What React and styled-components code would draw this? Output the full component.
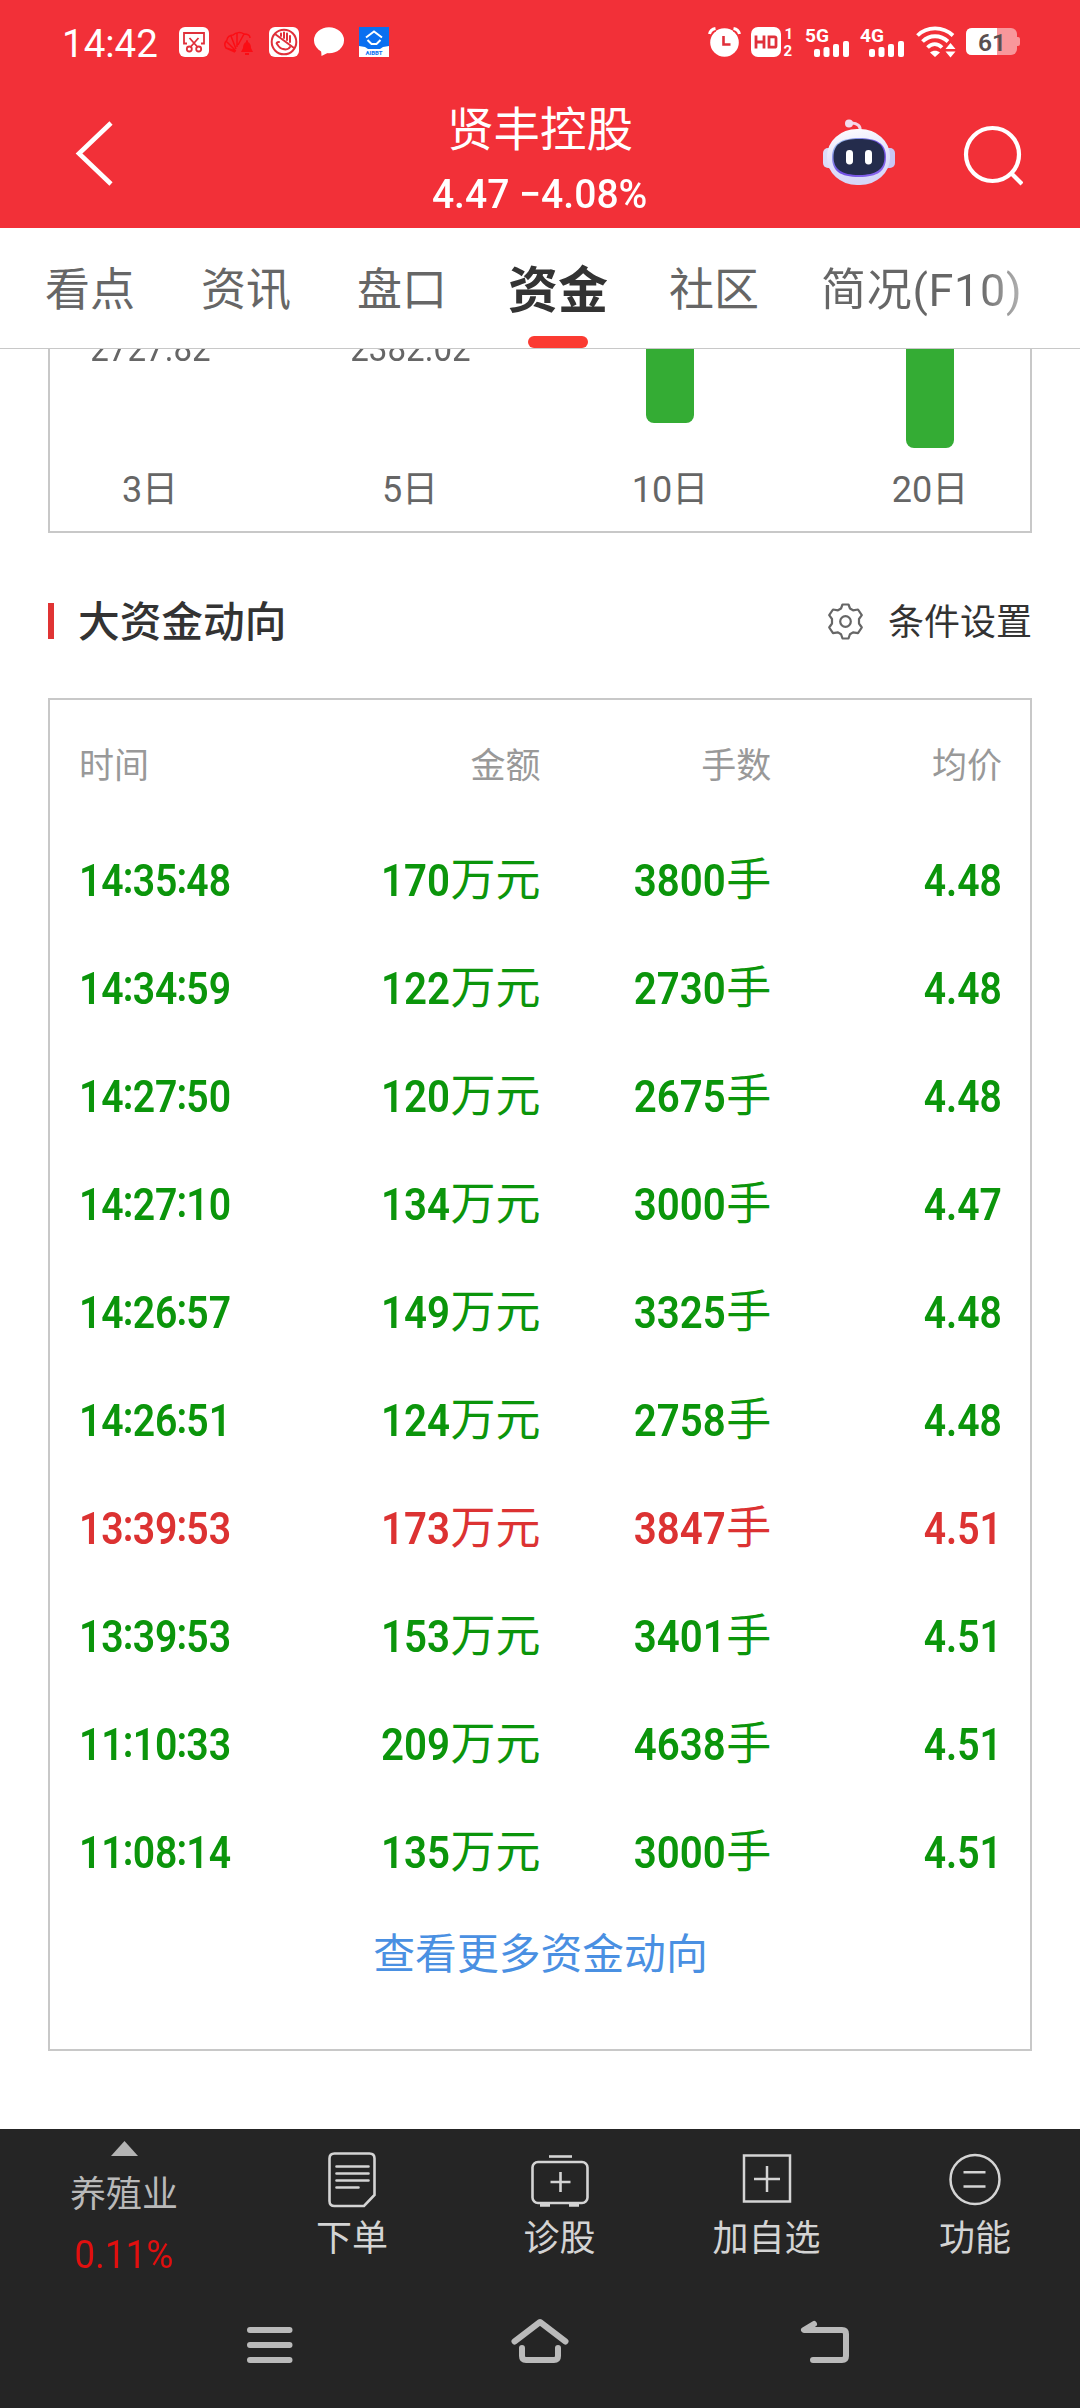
import React from 'react';
import styled, { createGlobalStyle } from 'styled-components';

const GlobalStyle = createGlobalStyle`
  body {
    margin: 0;
    background: #fff;
    font-family: Roboto, "Noto Sans CJK SC", sans-serif;
    color: #333;
  }
`;

const Page = styled.div`
  display: flex;
  flex-direction: column;
  width: 1080px;
  height: 2408px;
  overflow: hidden;
`;

const StatusBar = styled.div`
  display: flex;
  justify-content: space-between;
  align-items: center;
  height: 84px;
  padding: 0 60px 0 62px;
  box-sizing: border-box;
  background: #f23038;
  color: #fff;
`;

const StatusGroup = styled.div`
  display: flex;
  align-items: center;
  gap: ${({ $gap }) => $gap}px;

  svg {
    display: block;
    overflow: visible;
  }
`;

const Clock = styled.span`
  width: 102px;
  font-size: 38.5px;
  line-height: 44px;
  padding-top: 4px;
  white-space: nowrap;
`;

const Header = styled.header`
  display: grid;
  grid-template-columns: 300px 1fr 300px;
  height: 144px;
  background: #f23038;
  color: #fff;
`;

const BackButton = styled.button`
  display: flex;
  align-items: center;
  padding: 0 0 6px 72px;
  border: 0;
  background: none;
`;

const HeaderTitle = styled.div`
  display: flex;
  flex-direction: column;
  align-items: center;
  padding-top: 18px;
`;

const StockName = styled.div`
  font-size: 46.5px;
  line-height: 56px;
`;

const StockPrice = styled.div`
  font-size: 40.5px;
  font-weight: 500;
  line-height: 50px;
  margin-top: 11px;
  white-space: pre;
  transform: scaleX(0.965);
`;

const HeaderActions = styled.div`
  display: flex;
  align-items: flex-start;
  gap: 66px;
  padding: 35px 0 0 43px;

  svg:last-child {
    margin-top: 5px;
  }
`;

const TabBar = styled.nav`
  display: flex;
  gap: 66px;
  height: 121px;
  padding-left: 45px;
  box-sizing: border-box;
  border-bottom: 1px solid #c8c8c8;
`;

const StyledTab = styled.div`
  display: flex;
  flex-direction: column;
  align-items: ${({ $wide }) => ($wide ? 'flex-start' : 'center')};
  justify-content: space-between;
  flex: none;
  width: ${({ $wide }) => ($wide ? '202px' : '90px')};
  font-size: ${({ $active }) => ($active ? 50 : 45)}px;
  font-weight: ${({ $active }) => ($active ? 600 : 400)};
  line-height: 66px;
  padding-top: 30px;
  color: ${({ $active }) => ($active ? '#333' : '#666')};
  white-space: nowrap;
`;

const TabLabel = styled.span`
  ${({ $fade }) => $fade && `
    margin-left: -4px;
    letter-spacing: 0.7px;
    background: linear-gradient(90deg, #666 78%, #b4b4b4 100%);
    background-clip: text;
    color: transparent;
  `}
`;

const TabMark = styled.div`
  width: 60px;
  height: 12px;
  border-radius: 6px;
  background: #fb3b32;
`;

const Main = styled.main`
  flex: 1;
  padding: 0 48px;
  overflow: hidden;
`;

const ChartCard = styled.section`
  display: grid;
  grid-template-columns: repeat(4, 260px);
  justify-content: center;
  height: 184px;
  box-sizing: border-box;
  border: 2px solid #c8c8c8;
  border-top: 0;
`;

const ChartColumn = styled.div`
  display: flex;
  flex-direction: column;
  justify-content: space-between;
  align-items: center;
  padding-bottom: 22px;
`;

const ChartValue = styled.div`
  display: flex;
  align-items: flex-end;
  height: 18px;
  font-size: 36px;
  line-height: 36px;
  color: #666;
  overflow: hidden;
  transform: scaleX(0.92);
`;

const ChartBar = styled.div`
  width: 48px;
  border-radius: 0 0 8px 8px;
  background: #34ac34;
`;

const ChartLabel = styled.div`
  font-size: 36px;
  line-height: 38px;
  color: #666;
`;

const SectionHead = styled.div`
  display: flex;
  align-items: center;
  height: 165px;
  box-sizing: border-box;
  padding-top: 15px;
`;

const SectionMark = styled.div`
  width: 6px;
  height: 36px;
  margin-bottom: 4px;
  background: #e03434;
`;

const SectionTitle = styled.h2`
  flex: 1;
  margin: 0 0 0 24px;
  font-size: 41.7px;
  font-weight: 500;
  line-height: 50px;
`;

const Settings = styled.div`
  display: flex;
  align-items: center;
  gap: 24px;
  font-size: 36px;
  line-height: 44px;

  svg {
    margin-bottom: 4px;
  }
`;

const FlowCard = styled.section`
  display: flex;
  flex-direction: column;
  height: 1353px;
  box-sizing: border-box;
  padding: 0 28px 0 29px;
  border: 2px solid #c8c8c8;
`;

const FlowHead = styled.div`
  display: grid;
  grid-template-columns: repeat(4, 1fr);
  align-items: center;
  height: 125px;
  font-size: 35px;
  color: #999;
`;

const FlowRow = styled.div`
  display: grid;
  grid-template-columns: repeat(4, 1fr);
  align-items: center;
  height: 108px;
  box-sizing: border-box;
  padding-top: 3px;
  font-size: 45px;
  line-height: 60px;
  color: ${({ $up }) => ($up ? '#dc3232' : '#0b950b')};
`;

const Cell = styled.div`
  text-align: ${({ $left }) => ($left ? 'left' : 'right')};
  white-space: nowrap;
`;

const Num = styled.span`
  display: inline-block;
  font-weight: 600;
  transform: scaleX(${({ $scale = 0.895 }) => $scale});
  transform-origin: ${({ $left }) => ($left ? 'left' : 'right')};
`;

const Colon = styled.span`
  margin: 0 -1px;
  line-height: 1;
  vertical-align: 3px;
`;

const MoreLink = styled.a`
  margin-top: 20px;
  text-align: center;
  font-size: 41.8px;
  line-height: 60px;
  color: #4a90e2;
`;

const BottomBar = styled.footer`
  display: grid;
  grid-template-columns: 248px 208px 207px 207px 210px;
  height: 157px;
  background: #252525;
  color: #d4d4d4;
`;

const Sector = styled.div`
  display: flex;
  flex-direction: column;
  align-items: center;
  padding-top: 12px;
  font-size: 36px;
  line-height: 44px;
  color: #b9b9b9;
`;

const SectorName = styled.div`
  margin-top: 17px;
`;

const SectorChange = styled.div`
  margin-top: 16px;
  font-size: 38px;
  color: #e01010;
  transform: scaleX(0.97);
`;

const Action = styled.div`
  display: flex;
  flex-direction: column;
  align-items: center;
  padding-top: 20px;
  font-size: 36px;
  line-height: 44px;

  svg {
    margin-bottom: 8px;
  }
`;

const NavBar = styled.div`
  display: grid;
  grid-template-columns: 405px 270px 300px;
  height: 122px;
  background: #252525;

  svg {
    justify-self: center;
    margin-top: 28px;
  }

  svg:first-child {
    margin-left: 135px;
  }
`;

const ScissorsIcon = () => (
  <svg width="30" height="30" viewBox="0 0 30 30" fill="none" stroke="#e0303a" strokeWidth="1.8">
    <rect width="30" height="30" rx="6" fill="#fff" stroke="none" />
    <path d="M8 16.5H5V6h20v10.500h-3M10.500 11l8 9M19.500 11l-8 9" />
    <circle cx="10.300" cy="22" r="2.500" />
    <circle cx="19.700" cy="22" r="2.500" />
  </svg>
);

const ShellIcon = () => (
  <svg width="30" height="30" viewBox="0 0 30 30" fill="none" stroke="#fb0d14" strokeWidth="1.500">
    <path d="M12 24 2 21c-2-3-1-6 1-8 0-3 3-5 6-5 3-3 8-3 11-1 4 0 6 2 6 4M11 23 2 14M12 22 7 9M13 20 13 6M14 18l6-11M2 21l9 4" />
    <path d="M23 13c-1 0-1 1-1 2-2 1-3 3-3 6l-2 4h12l-2-4c0-3-1-5-3-6 0-1 0-2-1-2zM21 26h4v2h-4z" fill="#fb0d14" stroke="none" />
  </svg>
);

const BlockIcon = () => (
  <svg width="30" height="30" viewBox="0 0 30 30" fill="none" stroke="#e0303a" strokeWidth="2" strokeLinecap="round">
    <rect width="30" height="30" rx="6" fill="#fff" stroke="none" />
    <circle cx="15" cy="15" r="12.300" />
    <path d="M6 7l19 14" />
    <path d="M12 9V6.500M15 11V5.500M18 13V6.500M21 15V9" />
    <path d="M10 15c-2 0-3 1-2 2 2 3 3 5 6 5 3 1 6 0 7-2" />
  </svg>
);

const BubbleIcon = () => (
  <svg width="30" height="30" viewBox="0 0 30 30" fill="#fff">
    <ellipse cx="15" cy="13.200" rx="15" ry="13" />
    <path d="M7 22l.5 7 8-4z" />
  </svg>
);

const BankIcon = () => (
  <svg width="30" height="30" viewBox="0 0 30 30" fill="none">
    <path d="M0 0h30v30H0z" fill="#fff" />
    <path d="M0 0h30v19l-6 1-3 2H9l-3-2-6-1z" fill="#0a6ff0" />
    <path d="M7 10.500 15 4.500l8 6M8.500 13l4 4h5l4-4" stroke="#fff" strokeWidth="2" />
    <text x="15" y="28" textAnchor="middle" fontSize="6" fontWeight="700" fill="#0a6ff0">AIBBT</text>
  </svg>
);

const AlarmIcon = () => (
  <svg width="33" height="30" viewBox="0 0 33 30" fill="none">
    <circle cx="16.500" cy="15.500" r="14.300" fill="#fff" />
    <path d="M1.500 7C2 4.500 4.500 2 7.500 1.500M31.500 7C31 4.500 28.500 2 25.500 1.500" stroke="#f23038" strokeWidth="6" />
    <path d="M1.500 7C2 4.500 4.500 2 7.500 1.500M31.500 7C31 4.500 28.500 2 25.500 1.500" stroke="#fff" strokeWidth="3" />
    <path d="M15.500 9v8.500h7" stroke="#e0303a" strokeWidth="2.600" />
  </svg>
);

const HdIcon = () => (
  <svg width="43" height="30" viewBox="0 0 43 30" fill="none" stroke="#e0303a" strokeWidth="2.800">
    <rect width="30" height="30" rx="7" fill="#fff" stroke="none" />
    <path d="M5 8.500v13M13 8.500v13M5 15h8M18 9.800h5.500q1.500 0 1.500 1.500v7.400q0 1.500-1.500 1.500H18z" />
    <g fill="#fff" stroke="none" fontSize="15" fontWeight="700">
      <text x="33.500" y="11.500">1</text>
      <text x="32.500" y="28.700">2</text>
    </g>
  </svg>
);

const SignalIcon = ({ label }) => (
  <svg width="45" height="30" viewBox="0 0 45 30" fill="#fff">
    <text x="0" y="14.500" fontSize="19" fontWeight="700" textLength="24" lengthAdjust="spacingAndGlyphs">{label}</text>
    <rect x="9" y="22" width="6" height="8" rx="2" />
    <rect x="18.500" y="20" width="6" height="10" rx="2" />
    <rect x="28" y="17" width="6" height="13" rx="2" />
    <rect x="38" y="14" width="6" height="16" rx="2" />
  </svg>
);

const WifiIcon = () => (
  <svg width="40" height="30" viewBox="0 0 40 30" fill="none" stroke="#fff" strokeWidth="3.800">
    <path d="M1.500 8.500C11-1 27-1 37 8.500M6.500 14.500c7-7 18-7 25.500 0M11.500 20.500c4.500-4.500 10-4.500 14.500 0" />
    <path d="M19 30l-5-4.500c3-2.500 7-2.500 10 0zM29.500 22l5-6 5 6zM29.500 24.500h10l-5 6z" fill="#fff" stroke="none" />
  </svg>
);

const BatteryIcon = () => (
  <svg width="54" height="28" viewBox="0 0 54 28">
    <rect width="51" height="27" rx="6" fill="#f8979b" />
    <path d="M51 9h1q2 0 2 2v5q0 2-2 2h-1z" fill="#f8979b" />
    <path d="M6 0h25v27H6q-6 0-6-6V6q0-6 6-6z" fill="#fff" />
    <text x="12" y="22.500" fontSize="24.500" fontWeight="600" fill="#5a4f50">61</text>
  </svg>
);

const BackIcon = () => (
  <svg width="44" height="68" viewBox="0 0 44 68" fill="none" stroke="#fff" strokeWidth="4.600">
    <path d="M39 4 7 34.500 39 65" />
  </svg>
);

const RobotIcon = () => (
  <svg width="72" height="68" viewBox="0 0 72 68" fill="none">
    <defs>
      <linearGradient id="shell" x1="0" y1="0" x2="0.200" y2="1">
        <stop offset="0" stopColor="#fff" />
        <stop offset="0.600" stopColor="#e2e0fa" />
        <stop offset="1" stopColor="#d6d6f8" />
      </linearGradient>
      <linearGradient id="rim" x1="0" y1="0" x2="1" y2="1">
        <stop offset="0" stopColor="#a9dcf2" />
        <stop offset="0.500" stopColor="#6d4be0" />
        <stop offset="1" stopColor="#8d6cf0" />
      </linearGradient>
    </defs>
    <path d="M37 12c1-5-3-8-8-8" stroke="#f6d5e6" strokeWidth="3" />
    <circle cx="26" cy="4.500" r="4" fill="#f2dcee" />
    <rect x="0" y="29" width="12" height="20" rx="5" fill="#dcdcf8" />
    <rect x="60" y="29" width="12" height="20" rx="5" fill="#c9c6f4" />
    <rect x="4" y="10" width="63" height="56" rx="30" ry="27" fill="url(#shell)" />
    <path d="M36 19c18 0 27 6 27 19 0 14-8 20-27 20S9 52 9 38c0-13 9-19 27-19z" fill="url(#rim)" />
    <path d="M36 20c17 0 25.500 5 25.500 18 0 12-8 18-25.500 18s-25.500-6-25.500-18c0-13 8.500-18 25.500-18z" fill="#242c4c" />
    <rect x="23" y="31" width="7" height="14.500" rx="3.400" fill="#fff" />
    <rect x="42" y="31" width="7" height="14.500" rx="3.400" fill="#fff" />
  </svg>
);

const SearchIcon = () => (
  <svg width="62" height="66" viewBox="0 0 62 66" fill="none" stroke="#fff" strokeWidth="4.200">
    <circle cx="31.500" cy="30.500" r="26.500" />
    <path d="M50 49l11 11" />
  </svg>
);

const GearIcon = () => (
  <svg width="37" height="37" viewBox="0 0 37 37" fill="none" stroke="#666" strokeWidth="2.200" strokeLinejoin="round">
    <path d="M15.500 1.500h6l1.500 4 3 1.800 5-.8 3.800 5.700-2.800 3.800v4.500l2.800 4-3.800 5.700-5-.8-3 1.800-1.500 4.300h-6l-1.500-4.300-3-1.800-5 .8-3.800-5.700 2.800-4V16l-2.800-3.800L6 6.500l5 .8 3-1.800z" />
    <circle cx="18.500" cy="18.500" r="5.300" />
  </svg>
);

const ArrowIcon = () => (
  <svg width="27" height="15" viewBox="0 0 27 15">
    <path d="M13.500 0 27 15H0z" fill="#b4b4b4" />
  </svg>
);

const OrderIcon = () => (
  <svg width="50" height="60" viewBox="0 0 50 60" fill="none" stroke="#d4d4d4" strokeWidth="2.600" strokeLinecap="round">
    <path d="M7.500 4.500h35q5 0 5 5V46L37 57H7.500q-5 0-5-5V9.500q0-5 5-5z" />
    <path d="M9.500 17.500h32M9.500 24.500h32M9.500 31.500h32M9.500 38.500h22" />
  </svg>
);

const DiagnoseIcon = () => (
  <svg width="58" height="60" viewBox="0 0 58 60" fill="none" stroke="#d4d4d4" strokeWidth="2.600">
    <path d="M18 7.500h23" />
    <rect x="1.500" y="13" width="55" height="41" rx="5.500" />
    <path d="M29.500 23v20M19.500 33h20" />
    <path d="M9 56h10M38 56h10" strokeWidth="3.600" />
  </svg>
);

const AddIcon = () => (
  <svg width="50" height="60" viewBox="0 0 50 60" fill="none" stroke="#d4d4d4" strokeWidth="2.500">
    <rect x="2" y="6.500" width="46" height="46" />
    <path d="M25 17v26M12 30h26" />
  </svg>
);

const FunctionIcon = () => (
  <svg width="52" height="60" viewBox="0 0 52 60" fill="none" stroke="#d4d4d4" strokeWidth="2.500">
    <circle cx="26" cy="30.500" r="24.500" />
    <path d="M14.500 23.300h22M14.500 37.500h22" />
  </svg>
);

const MenuIcon = () => (
  <svg width="58" height="60" viewBox="0 0 58 60" stroke="#bababa" strokeWidth="6" strokeLinecap="round">
    <path d="M9 16h39.500M9 31h39.500M9 46h39.500" />
  </svg>
);

const HomeIcon = () => (
  <svg width="60" height="60" viewBox="0 0 60 60" fill="none" stroke="#bababa" strokeWidth="6" strokeLinecap="round" strokeLinejoin="round">
    <path d="M4.500 27.500 30 8l25.500 19.500M12 34v8q0 4 4 4h28q4 0 4-4v-8" />
  </svg>
);

const ReturnIcon = () => (
  <svg width="58" height="60" viewBox="0 0 58 60" fill="none" stroke="#bababa" strokeWidth="6" strokeLinecap="round" strokeLinejoin="round">
    <path d="M18 10 8 16h38q4 0 4 4v22q0 4-4 4H17" />
  </svg>
);

const tabs = ['看点', '资讯', '盘口', '资金', '社区', '简况(F10)'];

const periods = [
  { label: '3日', value: '2727.82' },
  { label: '5日', value: '2382.02' },
  { label: '10日', bar: 74 },
  { label: '20日', bar: 99 },
];

const flows = [
  { time: '14:35:48', amount: 170, lots: 3800, price: '4.48' },
  { time: '14:34:59', amount: 122, lots: 2730, price: '4.48' },
  { time: '14:27:50', amount: 120, lots: 2675, price: '4.48' },
  { time: '14:27:10', amount: 134, lots: 3000, price: '4.47' },
  { time: '14:26:57', amount: 149, lots: 3325, price: '4.48' },
  { time: '14:26:51', amount: 124, lots: 2758, price: '4.48' },
  { time: '13:39:53', amount: 173, lots: 3847, price: '4.51', up: true },
  { time: '13:39:53', amount: 153, lots: 3401, price: '4.51' },
  { time: '11:10:33', amount: 209, lots: 4638, price: '4.51' },
  { time: '11:08:14', amount: 135, lots: 3000, price: '4.51' },
];

const Tab = ({ label, active }) => {
  const wide = label.length > 2;
  return (
    <StyledTab $active={active} $wide={wide}>
      <TabLabel $fade={wide}>{label}</TabLabel>
      {active && <TabMark />}
    </StyledTab>
  );
};

const Time = ({ value }) => {
  const [h, m, s] = value.split(':');
  return (
    <Num $left $scale={0.87}>{h}<Colon>:</Colon>{m}<Colon>:</Colon>{s}</Num>
  );
};

const Flow = ({ flow }) => (
  <FlowRow $up={flow.up}>
    <Cell $left><Time value={flow.time} /></Cell>
    <Cell><Num>{flow.amount}</Num>万元</Cell>
    <Cell><Num>{flow.lots}</Num>手</Cell>
    <Cell><Num $scale={0.87}>{flow.price}</Num></Cell>
  </FlowRow>
);

export default function App() {
  return (
    <Page>
      <GlobalStyle />
      <StatusBar>
        <StatusGroup $gap={15}>
          <Clock>14:42</Clock>
          <ScissorsIcon />
          <ShellIcon />
          <BlockIcon />
          <BubbleIcon />
          <BankIcon />
        </StatusGroup>
        <StatusGroup $gap={10.5}>
          <AlarmIcon />
          <HdIcon />
          <SignalIcon label="5G" />
          <SignalIcon label="4G" />
          <WifiIcon />
          <BatteryIcon />
        </StatusGroup>
      </StatusBar>

      <Header>
        <BackButton><BackIcon /></BackButton>
        <HeaderTitle>
          <StockName>贤丰控股</StockName>
          <StockPrice>4.47 −4.08%</StockPrice>
        </HeaderTitle>
        <HeaderActions>
          <RobotIcon />
          <SearchIcon />
        </HeaderActions>
      </Header>

      <TabBar>
        {tabs.map(label => (
          <Tab key={label} label={label} active={label === '资金'} />
        ))}
      </TabBar>

      <Main>
        <ChartCard>
          {periods.map(({ label, value, bar }) => (
            <ChartColumn key={label}>
              {value ? <ChartValue>{value}</ChartValue> : <ChartBar style={{ height: bar }} />}
              <ChartLabel>{label}</ChartLabel>
            </ChartColumn>
          ))}
        </ChartCard>

        <SectionHead>
          <SectionMark />
          <SectionTitle>大资金动向</SectionTitle>
          <Settings><GearIcon />条件设置</Settings>
        </SectionHead>

        <FlowCard>
          <FlowHead>
            <Cell $left>时间</Cell>
            <Cell>金额</Cell>
            <Cell>手数</Cell>
            <Cell>均价</Cell>
          </FlowHead>
          {flows.map((flow, i) => <Flow key={i} flow={flow} />)}
          <MoreLink>查看更多资金动向</MoreLink>
        </FlowCard>
      </Main>

      <BottomBar>
        <Sector>
          <ArrowIcon />
          <SectorName>养殖业</SectorName>
          <SectorChange>0.11%</SectorChange>
        </Sector>
        <Action><OrderIcon />下单</Action>
        <Action><DiagnoseIcon />诊股</Action>
        <Action><AddIcon />加自选</Action>
        <Action><FunctionIcon />功能</Action>
      </BottomBar>
      <NavBar>
        <MenuIcon />
        <HomeIcon />
        <ReturnIcon />
      </NavBar>
    </Page>
  );
}
